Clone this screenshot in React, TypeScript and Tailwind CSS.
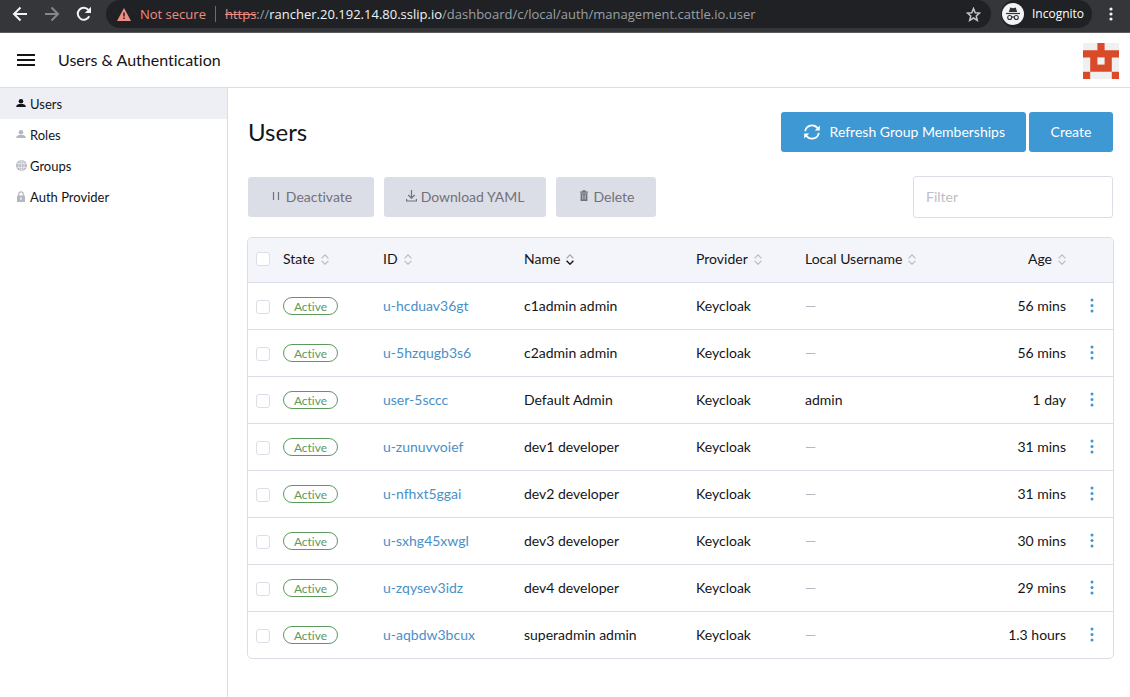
import React from "react";

type User = {
  id: string;
  name: string;
  local?: string;
  age: string;
};

const users: User[] = [
  { id: "u-hcduav36gt", name: "c1admin admin", age: "56 mins" },
  { id: "u-5hzqugb3s6", name: "c2admin admin", age: "56 mins" },
  { id: "user-5sccc", name: "Default Admin", local: "admin", age: "1 day" },
  { id: "u-zunuvvoief", name: "dev1 developer", age: "31 mins" },
  { id: "u-nfhxt5ggai", name: "dev2 developer", age: "31 mins" },
  { id: "u-sxhg45xwgl", name: "dev3 developer", age: "30 mins" },
  { id: "u-zqysev3idz", name: "dev4 developer", age: "29 mins" },
  { id: "u-aqbdw3bcux", name: "superadmin admin", age: "1.3 hours" },
];

function BrowserBar() {
  return (
    <div className="flex h-[33px] items-start border-b border-[#5b5c5f] bg-[#35363a] font-['Open_Sans',sans-serif] text-[13px] leading-7 text-white">
      <div className="flex h-7 w-[106px] shrink-0 items-center gap-4 pl-3">
        <button type="button" aria-label="Back">
          <svg className="size-4" viewBox="0 0 16 16" fill="none" stroke="#f1f3f4" strokeWidth="2">
            <path d="M15 8H2.5M8.500 1.500L2 8l6.500 6.500" />
          </svg>
        </button>
        <button type="button" aria-label="Forward">
          <svg className="size-4" viewBox="0 0 16 16" fill="none" stroke="#85878a" strokeWidth="2">
            <path d="M1 8h12.500M7.500 1.500L14 8l-6.500 6.500" />
          </svg>
        </button>
        <button type="button" aria-label="Reload">
          <svg className="size-4" viewBox="0 0 16 16">
            <path d="M13.200 10.300A6 6 0 1 1 12.400 3.900" fill="none" stroke="#f1f3f4" strokeWidth="2" />
            <path d="M15 .800V7H8.800z" fill="#f1f3f4" />
          </svg>
        </button>
      </div>
      <div className="flex h-7 min-w-0 flex-1 items-center rounded-full bg-[#202124] pl-[11px] pr-[10px]">
        <svg className="h-[13px] w-[14px] shrink-0" viewBox="0 0 14 13">
          <path d="M7 0l7 13H0z" fill="#ee8d83" />
          <path d="M7 4.500v4M7 9.500v1.600" stroke="#202124" strokeWidth="1.500" />
        </svg>
        <span className="ml-[9px] shrink-0 text-[#ee8d83]">Not secure</span>
        <span className="ml-[9px] h-4 w-px shrink-0 bg-[#6b6d70]" />
        <span className="ml-[9px] min-w-0 flex-1 truncate text-[#9aa0a6]">
          <span className="text-[#ee8d83] line-through">https</span>://
          <span className="text-[#f1f3f4]">rancher.20.192.14.80.sslip.io</span>
          /dashboard/c/local/auth/management.cattle.io.user
        </span>
        <button type="button" aria-label="Bookmark this tab">
          <svg className="size-[15px]" viewBox="0 0 24 24" fill="none" stroke="#c4c7ca" strokeWidth="2.400">
            <path d="M12 2.500l2.700 6.600 7.100.600-5.400 4.700 1.700 7L12 17.600l-6.100 3.800 1.700-7L2.200 9.700l7.100-.600z" />
          </svg>
        </button>
      </div>
      <div className="ml-[10px] flex h-7 w-[91px] shrink-0 items-center rounded-full bg-[#202124] pl-px text-[12px]">
        <svg className="size-[22px] shrink-0" viewBox="0 0 22 22">
          <circle cx="11" cy="11" r="11" fill="#f1f3f4" />
          <path d="M8.300 4.600l2.700.600 2.700-.600 1.500 4.400H6.800z" fill="#303134" />
          <path d="M4 10.500h14" stroke="#303134" strokeWidth="1.200" />
          <g fill="none" stroke="#303134" strokeWidth="1.100">
            <circle cx="7.700" cy="14.500" r="2" />
            <circle cx="14.300" cy="14.500" r="2" />
            <path d="M9.700 14.300q1.300-.800 2.600 0" />
          </g>
        </svg>
        <span className="ml-2">Incognito</span>
      </div>
      <button type="button" aria-label="Browser menu" className="flex h-7 w-[38px] shrink-0 items-center justify-center">
        <svg className="h-[14px] w-1" viewBox="0 0 4 14" fill="#f1f3f4">
          <circle cx="2" cy="2" r="1.600" />
          <circle cx="2" cy="7" r="1.600" />
          <circle cx="2" cy="12" r="1.600" />
        </svg>
      </button>
    </div>
  );
}

function Identicon() {
  return (
    <svg className="size-9" viewBox="0 0 5 5" role="img" aria-label="Account">
      <rect width="5" height="5" fill="#f0f0f0" />
      <path d="M2 0h1v1h2v1H4v2H1V2H0V1h2zM0 4h1v1H0zM4 4h1v1H4z" fill="#d94b28" />
      <rect x="2" y="2" width="1" height="1" fill="#f0f0f0" />
    </svg>
  );
}

function PersonIcon() {
  return (
    <svg className="h-[9px] w-[10px]" viewBox="0 0 10 9" fill="currentColor">
      <circle cx="5" cy="2.300" r="2.300" />
      <path d="M.300 8V7.200C.300 5.500 2.400 4.900 5 4.900s4.700.600 4.700 2.300V8z" />
    </svg>
  );
}

function GlobeIcon() {
  return (
    <svg className="size-[11px]" viewBox="0 0 11 11">
      <circle cx="5.500" cy="5.500" r="5.400" fill="currentColor" />
      <g fill="none" stroke="#fff" strokeWidth=".6">
        <path d="M1 3.700h9M1 7.300h9M5.500.800v9.400" />
        <ellipse cx="5.500" cy="5.500" rx="2.600" ry="4.600" />
      </g>
    </svg>
  );
}

function LockIcon() {
  return (
    <svg className="h-[11px] w-2" viewBox="0 0 8 11">
      <path d="M1.800 5V3a2.200 2.200 0 0 1 4.400 0v2" fill="none" stroke="currentColor" strokeWidth="1.200" />
      <rect y="4.600" width="8" height="6.400" rx=".6" fill="currentColor" />
      <path d="M4 6.300v2.700" stroke="#fff" strokeWidth="1.100" />
    </svg>
  );
}

const navItems = [
  { label: "Users", icon: <PersonIcon />, active: true },
  { label: "Roles", icon: <PersonIcon />, active: false },
  { label: "Groups", icon: <GlobeIcon />, active: false },
  { label: "Auth Provider", icon: <LockIcon />, active: false },
];

function SortIcon({ active = false }: { active?: boolean }) {
  return (
    <svg className="mt-[2px] h-[11px] w-2 shrink-0" viewBox="0 0 8 11" fill="none" strokeWidth="1.200">
      <path d="M.600 4.300L4 .900l3.400 3.400" stroke={active ? "#9fa1aa" : "#b9bbc4"} />
      <path
        d="M.600 6.800L4 10.200l3.400-3.400"
        stroke={active ? "#141419" : "#b9bbc4"}
        strokeWidth={active ? 1.4 : 1.2}
      />
    </svg>
  );
}

function Heading({ label, active, right }: { label: string; active?: boolean; right?: boolean }) {
  return (
    <th className="px-[5px] pb-[2px] font-normal" aria-sort={active ? "ascending" : undefined}>
      <button type="button" className={right ? "ml-auto flex items-center gap-[6px]" : "flex items-center gap-[6px]"}>
        {label}
        <SortIcon active={active} />
      </button>
    </th>
  );
}

function Check({ label }: { label: string }) {
  return (
    <input
      type="checkbox"
      aria-label={label}
      className="block size-[14px] appearance-none rounded-[3px] border border-[#dcdee7] bg-white checked:bg-[#3d98d3]"
    />
  );
}

const disabledButton =
  "flex h-10 items-center justify-center gap-1 rounded-[3px] bg-[#dcdee7] text-[#717179]";

export default function App() {
  return (
    <div className="flex min-h-screen flex-col bg-white font-['Lato',sans-serif] text-[14px] leading-5 text-[#141419] [font-variant-ligatures:none]">
      <BrowserBar />
      <header className="flex h-[55px] items-center border-b border-[#dcdee7] pl-[17px] pr-[11px]">
        <button type="button" aria-label="Open menu">
          <svg className="h-3 w-[18px]" viewBox="0 0 18 12" fill="#141419">
            <path d="M0 0h18v2H0zM0 5h18v2H0zM0 10h18v2H0z" />
          </svg>
        </button>
        <span className="ml-[23px] flex-1 text-[16px]">Users &amp; Authentication</span>
        <div className="pt-px">
          <Identicon />
        </div>
      </header>
      <div className="flex flex-1">
        <nav className="w-[228px] shrink-0 border-r border-[#dcdee7] text-[13px]">
          {navItems.map((item) => (
            <a
              key={item.label}
              href="#"
              className={
                item.active
                  ? "flex h-[31px] items-center gap-[3px] bg-[#eeeff4] pl-[15px]"
                  : "flex h-[31px] items-center gap-[3px] pl-[15px]"
              }
            >
              <span className={item.active ? "flex w-3 justify-center" : "flex w-3 justify-center text-[#b6b6c2]"}>
                {item.icon}
              </span>
              {item.label}
            </a>
          ))}
        </nav>
        <main className="min-w-0 flex-1 pb-5 pl-[19px] pr-4 pt-6">
          <div className="flex items-center gap-[3px] pl-px pr-px">
            <h1 className="flex-1 text-[24px] leading-10">Users</h1>
            <button
              type="button"
              className="flex h-10 items-center gap-[10px] rounded-[3px] bg-[#3d98d3] pl-[23px] pr-[21px] pb-px text-white"
            >
              <svg className="size-4" viewBox="0 0 16 16">
                <g fill="none" stroke="#fff" strokeWidth="1.800">
                  <path d="M1.200 7.200A6.900 6.900 0 0 1 13.600 4.200" />
                  <path d="M14.800 8.800A6.900 6.900 0 0 1 2.400 11.800" />
                </g>
                <path d="M15.800 1.600v5h-5zM.200 14.400v-5h5z" fill="#fff" />
              </svg>
              Refresh Group Memberships
            </button>
            <button type="button" className="h-10 w-[84px] rounded-[3px] bg-[#3d98d3] pb-px text-white">
              Create
            </button>
          </div>
          <div className="mt-6 flex items-center gap-[10px] pl-px pr-px">
            <button type="button" disabled className={`${disabledButton} w-[126px]`}>
              <svg className="mb-[3px] h-2 w-3" viewBox="0 0 12 8" stroke="currentColor" strokeWidth="1.200">
                <path d="M3.500 0v8M8.500 0v8" />
              </svg>
              Deactivate
            </button>
            <button type="button" disabled className={`${disabledButton} w-[162px]`}>
              <svg className="mb-[3px] h-3 w-[11px]" viewBox="0 0 11 12" fill="none" stroke="currentColor" strokeWidth="1.200">
                <path d="M5.500 0v8M2.300 5l3.200 3.200L8.700 5M.600 9v2h9.800V9" />
              </svg>
              Download YAML
            </button>
            <button type="button" disabled className={`${disabledButton} w-[100px]`}>
              <svg className="mb-[3px] h-[11px] w-3" viewBox="0 0 12 11">
                <path d="M2 1.400h2.400V.300h3.200v1.100H10v1.300H2zM2.600 3.300h6.800V11H2.600z" fill="currentColor" />
                <path d="M4.500 4.500v5M6 4.500v5M7.500 4.500v5" stroke="#dcdee7" strokeWidth=".5" />
              </svg>
              Delete
            </button>
            <input
              type="text"
              aria-label="Filter"
              placeholder="Filter"
              className="ml-auto h-[42px] w-[200px] rounded-[3px] border border-[#dcdee7] px-3 pb-px placeholder:text-[#bebec8]"
            />
          </div>
          <div className="mt-[19px] overflow-hidden rounded-[5px] border border-[#dcdee7]">
            <table className="w-full table-fixed text-left">
              <colgroup>
                <col className="w-[30px]" />
                <col className="w-[100px]" />
                <col className="w-[141px]" />
                <col />
                <col className="w-[109px]" />
                <col className="w-[149px]" />
                <col className="w-[122px]" />
                <col className="w-[42px]" />
              </colgroup>
              <thead>
                <tr className="h-11 border-b border-[#dcdee7] bg-[#f4f5fa]">
                  <th className="pb-[2px] pl-2">
                    <Check label="Select all users" />
                  </th>
                  <Heading label="State" />
                  <Heading label="ID" />
                  <Heading label="Name" active />
                  <Heading label="Provider" />
                  <Heading label="Local Username" />
                  <Heading label="Age" right />
                  <td />
                </tr>
              </thead>
              <tbody>
                {users.map((user) => (
                  <tr key={user.id} className="h-[47px] border-b border-[#dcdee7] last:border-b-0">
                    <td className="pl-2 pt-[2px]">
                      <Check label={`Select ${user.id}`} />
                    </td>
                    <td className="px-[5px]">
                      <span className="flex h-[18px] w-[55px] items-center justify-center rounded-full border border-[#5d995d] pt-[2px] text-[12px] leading-4 text-[#5d995d]">
                        Active
                      </span>
                    </td>
                    <td className="px-[5px]">
                      <a href="#" className="text-[#4a90c8]">
                        {user.id}
                      </a>
                    </td>
                    <td className="px-[5px]">{user.name}</td>
                    <td className="px-[5px]">Keycloak</td>
                    <td className="px-[5px]">
                      {user.local ?? <span className="text-[#b6b6c2]">—</span>}
                    </td>
                    <td className="px-[5px] text-right">{user.age}</td>
                    <td className="pb-px">
                      <button
                        type="button"
                        aria-label={`Actions for ${user.id}`}
                        className="mx-auto flex h-6 w-6 items-center justify-center"
                      >
                        <svg className="h-[15px] w-1" viewBox="0 0 4 15" fill="#3d98d3">
                          <circle cx="2" cy="2" r="1.500" />
                          <circle cx="2" cy="7.500" r="1.500" />
                          <circle cx="2" cy="13" r="1.500" />
                        </svg>
                      </button>
                    </td>
                  </tr>
                ))}
              </tbody>
            </table>
          </div>
        </main>
      </div>
    </div>
  );
}
